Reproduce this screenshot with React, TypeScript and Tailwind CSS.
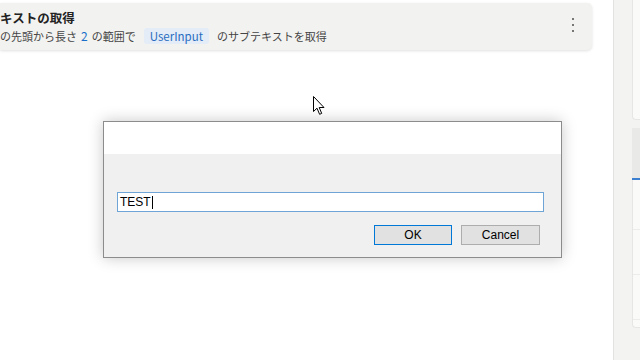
import React from 'react';

const Cursor: React.FC = () => (
  <svg width="13" height="20" viewBox="0 0 13 20" className="absolute left-[313px] top-[96px]">
    <path
      d="M0.5 0.5 L0.5 15.5 L4 12.2 L6.6 18.3 L8.7 17.4 L6.2 11.5 L11 11.5 Z"
      fill="#ffffff"
      stroke="#000000"
      strokeWidth="1"
      strokeLinejoin="round"
    />
  </svg>
);

const InputDialog: React.FC = () => (
  <div
    className="absolute left-[103px] top-[121px] w-[459px] h-[137px] border border-[#8c8c8c] bg-[#f0f0f0] shadow-[0_0_14px_rgba(0,0,0,0.22)] flex flex-col"
    style={{ fontFamily: '"Liberation Sans", Arial, sans-serif' }}
  >
    <div className="h-[32px] bg-white" />
    <div className="flex flex-col pl-[13px] pr-[17px] pt-[38px]">
      <div className="h-[20px] border border-[#6ea5d6] bg-white flex items-center px-[2px] text-[12px] text-black">
        TEST<span className="inline-block w-px h-[13px] bg-black ml-px" />
      </div>
      <div className="flex justify-end gap-[9px] mt-[13px] pr-[4px]">
        <button className="w-[78px] h-[20px] border border-[#0078d7] bg-[#e1e1e1] text-[12px] text-black leading-none">
          OK
        </button>
        <button className="w-[79px] h-[20px] border border-[#adadad] bg-[#e1e1e1] text-[12px] text-black leading-none">
          Cancel
        </button>
      </div>
    </div>
  </div>
);

const App: React.FC = () => {
  return (
    <div
      className="relative w-[640px] h-[360px] overflow-hidden bg-white flex"
      style={{ fontFamily: '"Noto Sans CJK JP", "Noto Sans", sans-serif' }}
    >
      <div className="flex-1 pt-[3px] pr-[21px]">
        <div className="h-[47px] bg-[#f2f2f0] rounded-r-[5px] shadow-[0_1px_3px_rgba(0,0,0,0.12)] flex items-center justify-between pr-[18px]">
          <div className="flex flex-col">
            <div className="text-[12.5px] font-bold text-[#222] leading-[17px]">キストの取得</div>
            <div className="flex items-center text-[11px] text-[#444] leading-[16px] mt-[2px] whitespace-nowrap">
              <span>の先頭から長さ</span>
              <span className="text-[#1a6fc9] text-[12px] mx-[4px]">2</span>
              <span>の範囲で</span>
              <span className="mx-[8px] px-[6px] rounded-[3px] bg-[#e3ecf7] text-[#2a6cc0] text-[11.5px]">UserInput</span>
              <span>のサブテキストを取得</span>
            </div>
          </div>
          <div className="flex flex-col gap-[4px] pb-[3px]">
            <span className="w-[2px] h-[2px] bg-[#777]" />
            <span className="w-[2px] h-[2px] bg-[#777]" />
            <span className="w-[2px] h-[2px] bg-[#777]" />
          </div>
        </div>
      </div>

      <div className="w-[27px] border-l border-[#e2e2e0] bg-[#f3f3f1] pl-[18px] flex flex-col">
        <div className="h-[120px] bg-[#fafaf8] rounded-bl-[4px] border-l border-b border-[#e6e6e4]" />
        <div className="h-[50px] mt-[8px] bg-[#e9e9e7]" />
        <div className="h-[2px] bg-[#3a7fd0]" />
        <div className="h-[148px] bg-[#fafaf8] rounded-bl-[4px] border-l border-b border-[#e6e6e4] flex flex-col">
          <div className="h-[50px] border-b border-[#ececea]" />
          <div className="h-[45px] border-b border-[#ececea]" />
          <div className="h-[45px] border-b border-[#ececea]" />
        </div>
      </div>

      <InputDialog />
      <Cursor />
    </div>
  );
};

export default App;
